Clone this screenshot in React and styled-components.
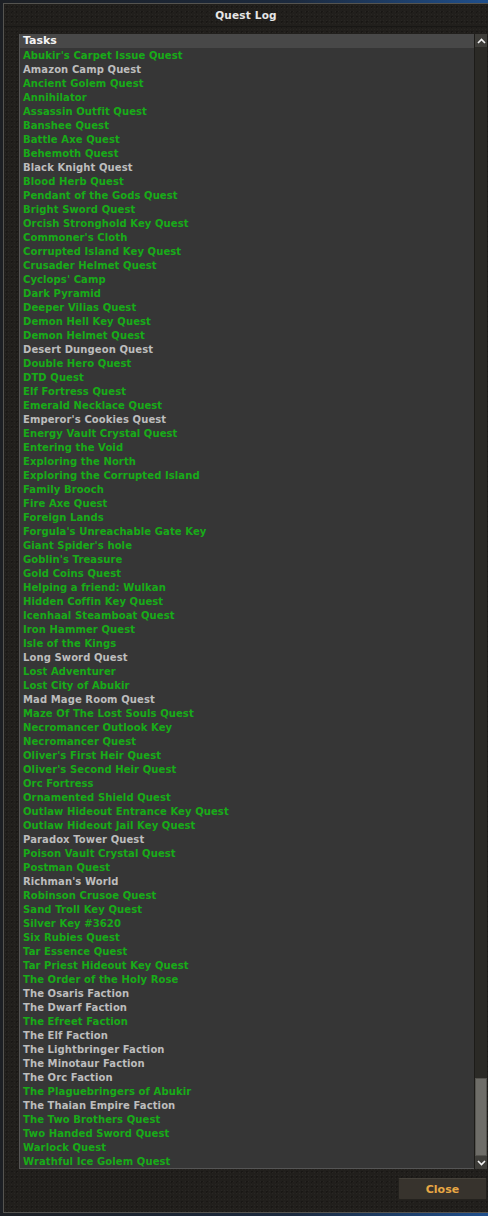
import styled, { createGlobalStyle } from "styled-components";

const GlobalStyle = createGlobalStyle`
  html, body {
    margin: 0;
    padding: 0;
    background: linear-gradient(90deg, #1c1f24 0%, #1c2a3e 60%, #1f4f8c 100%);
    font-family: "DejaVu Sans", Verdana, sans-serif;
    overflow: hidden;
  }
`;

const Window = styled.div`
  margin: 3px 0 0 3px;
  height: 1210px;
  box-sizing: border-box;
  border: 1px solid #555450;
  border-right: none;
  background-color: #211f1c;
  background-image: radial-gradient(rgba(255, 255, 255, 0.03) 1px, transparent 1px),
    radial-gradient(rgba(0, 0, 0, 0.25) 1px, transparent 1px);
  background-size: 3px 3px, 5px 5px;
  display: flex;
  flex-direction: column;
`;

const TitleBar = styled.div`
  height: 22px;
  display: flex;
  align-items: center;
  justify-content: center;
  color: #e6e6e6;
  font-size: 10.5px;
  letter-spacing: 0.2px;
  font-weight: bold;
  border-bottom: 1px solid #181715;
`;

const Body = styled.div`
  padding: 7px 1px 0 15px;
  display: flex;
  flex-direction: column;
  flex: 1;
`;

const Panel = styled.div`
  display: flex;
  height: 1135px;
`;

const List = styled.div`
  flex: 1;
  background: #363636;
  border-bottom: 1px solid #555;
  border-left: 1px solid #555;
`;

const Header = styled.div`
  height: 14px;
  background: #484848;
  color: #f4f4f4;
  font-size: 11px;
  font-weight: bold;
  line-height: 14px;
  padding-left: 3px;
`;

const Row = styled.div`
  height: 14px;
  line-height: 16px;
  overflow: hidden;
  padding-left: 3px;
  font-size: 10px;
  letter-spacing: 0.1px;
  font-weight: bold;
  white-space: nowrap;
  color: ${(p) => (p.$done ? "#bdbdbd" : "#18ac18")};
`;

const Scrollbar = styled.div`
  width: 12px;
  display: flex;
  flex-direction: column;
  background: #2b2a26;
  border-left: 1px solid #1d1c19;
`;

const ScrollButton = styled.div`
  height: 13px;
  background: #3e3d39;
  display: flex;
  align-items: center;
  justify-content: center;
`;

const Track = styled.div`
  flex: 1;
  display: flex;
  flex-direction: column;
  justify-content: flex-end;
`;

const Thumb = styled.div`
  height: 78px;
  background: #6e6d68;
  border: 1px solid #55544f;
  box-sizing: border-box;
`;

const Footer = styled.div`
  display: flex;
  justify-content: flex-end;
  padding-top: 9px;
`;

const CloseButton = styled.button`
  width: 89px;
  height: 22px;
  background: #37332d;
  border: 1px solid #24221e;
  border-top-color: #45413a;
  border-radius: 2px;
  color: #e8a844;
  font-family: "DejaVu Sans", Verdana, sans-serif;
  font-size: 11px;
  font-weight: bold;
  padding: 0;
`;

const quests = [
  ["Abukir's Carpet Issue Quest"],
  ["Amazon Camp Quest", 1],
  ["Ancient Golem Quest"],
  ["Annihilator"],
  ["Assassin Outfit Quest"],
  ["Banshee Quest"],
  ["Battle Axe Quest"],
  ["Behemoth Quest"],
  ["Black Knight Quest", 1],
  ["Blood Herb Quest"],
  ["Pendant of the Gods Quest"],
  ["Bright Sword Quest"],
  ["Orcish Stronghold Key Quest"],
  ["Commoner's Cloth"],
  ["Corrupted Island Key Quest"],
  ["Crusader Helmet Quest"],
  ["Cyclops' Camp"],
  ["Dark Pyramid"],
  ["Deeper Vilias Quest"],
  ["Demon Hell Key Quest"],
  ["Demon Helmet Quest"],
  ["Desert Dungeon Quest", 1],
  ["Double Hero Quest"],
  ["DTD Quest"],
  ["Elf Fortress Quest"],
  ["Emerald Necklace Quest"],
  ["Emperor's Cookies Quest", 1],
  ["Energy Vault Crystal Quest"],
  ["Entering the Void"],
  ["Exploring the North"],
  ["Exploring the Corrupted Island"],
  ["Family Brooch"],
  ["Fire Axe Quest"],
  ["Foreign Lands"],
  ["Forgula's Unreachable Gate Key"],
  ["Giant Spider's hole"],
  ["Goblin's Treasure"],
  ["Gold Coins Quest"],
  ["Helping a friend: Wulkan"],
  ["Hidden Coffin Key Quest"],
  ["Icenhaal Steamboat Quest"],
  ["Iron Hammer Quest"],
  ["Isle of the Kings"],
  ["Long Sword Quest", 1],
  ["Lost Adventurer"],
  ["Lost City of Abukir"],
  ["Mad Mage Room Quest", 1],
  ["Maze Of The Lost Souls Quest"],
  ["Necromancer Outlook Key"],
  ["Necromancer Quest"],
  ["Oliver's First Heir Quest"],
  ["Oliver's Second Heir Quest"],
  ["Orc Fortress"],
  ["Ornamented Shield Quest"],
  ["Outlaw Hideout Entrance Key Quest"],
  ["Outlaw Hideout Jail Key Quest"],
  ["Paradox Tower Quest", 1],
  ["Poison Vault Crystal Quest"],
  ["Postman Quest"],
  ["Richman's World", 1],
  ["Robinson Crusoe Quest"],
  ["Sand Troll Key Quest"],
  ["Silver Key #3620"],
  ["Six Rubies Quest"],
  ["Tar Essence Quest"],
  ["Tar Priest Hideout Key Quest"],
  ["The Order of the Holy Rose"],
  ["The Osaris Faction", 1],
  ["The Dwarf Faction", 1],
  ["The Efreet Faction"],
  ["The Elf Faction", 1],
  ["The Lightbringer Faction", 1],
  ["The Minotaur Faction", 1],
  ["The Orc Faction", 1],
  ["The Plaguebringers of Abukir"],
  ["The Thaian Empire Faction", 1],
  ["The Two Brothers Quest"],
  ["Two Handed Sword Quest"],
  ["Warlock Quest"],
  ["Wrathful Ice Golem Quest"],
];

function Chevron({ down }) {
  return (
    <svg width="9" height="6" viewBox="0 0 9 6">
      <path
        d={down ? "M1 1 L4.5 4.5 L8 1" : "M1 5 L4.5 1.5 L8 5"}
        stroke="#f0f0f0"
        strokeWidth="1.6"
        fill="none"
      />
    </svg>
  );
}

export default function App() {
  return (
    <>
      <GlobalStyle />
      <Window>
        <TitleBar>Quest Log</TitleBar>
        <Body>
          <Panel>
            <List>
              <Header>Tasks</Header>
              {quests.map(([name, done]) => (
                <Row key={name} $done={!!done}>
                  {name}
                </Row>
              ))}
            </List>
            <Scrollbar>
              <ScrollButton>
                <Chevron />
              </ScrollButton>
              <Track>
                <Thumb />
              </Track>
              <ScrollButton>
                <Chevron down />
              </ScrollButton>
            </Scrollbar>
          </Panel>
          <Footer>
            <CloseButton>Close</CloseButton>
          </Footer>
        </Body>
      </Window>
    </>
  );
}
